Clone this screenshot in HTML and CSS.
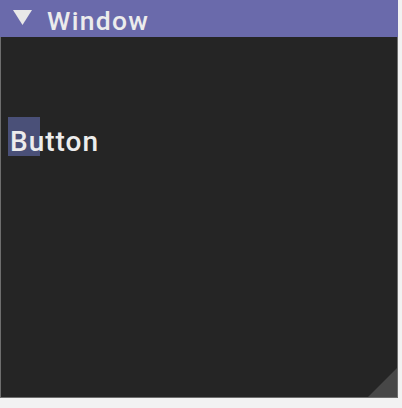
FILE: index.html
```html
<!DOCTYPE html>
<html>
<head>
<meta charset="utf-8">
<link rel="stylesheet" href="styles.css">
</head>
<body>
<div class="window">
  <div class="titlebar">
    <svg class="arrow" width="19" height="15" viewBox="0 0 19 15"><polygon points="0,0 19,0 9.5,15" fill="#e8e8e8"/></svg>
    <span class="title">Window</span>
  </div>
  <div class="content">
    <button class="btn"><span class="btn-label">Button</span></button>
    <svg class="grip" width="29" height="29" viewBox="0 0 29 29"><polygon points="29,0 29,29 0,29" fill="#474747"/></svg>
  </div>
</div>
</body>
</html>
```
FILE: styles.css
```css
html, body {
  margin: 0;
  padding: 0;
  background: #f2f2f2;
}
.window {
  width: 398px;
  height: 398px;
  display: flex;
  flex-direction: column;
  font-family: Roboto, "Liberation Sans", sans-serif;
}
.titlebar {
  height: 37px;
  background: #6a6aab;
  display: flex;
  align-items: center;
  padding-left: 13px;
  box-sizing: border-box;
}
.arrow {
  margin-top: -2px;
}
.title {
  margin-left: 15px;
  margin-top: 4px;
  color: #ececec;
  font-weight: 500;
  font-size: 26.5px;
  letter-spacing: 1.3px;
  line-height: 37px;
}
.content {
  position: relative;
  flex: 1;
  background: #252525;
  border: 1px solid #6e6e6e;
  border-top: none;
  padding: 80px 0 0 7px;
}
.btn {
  display: block;
  width: 32px;
  height: 39px;
  padding: 0 0 0 2px;
  margin: 0;
  border: none;
  background: #4a5078;
  overflow: visible;
  white-space: nowrap;
  text-align: left;
  font-family: Roboto, "Liberation Sans", sans-serif;
  font-weight: 500;
  font-size: 28px;
  letter-spacing: 1px;
  color: #ececec;
  line-height: 39px;
}
.btn-label {
  position: relative;
  top: 5px;
}
.grip {
  position: absolute;
  right: 0;
  bottom: 0;
  display: block;
}
```
